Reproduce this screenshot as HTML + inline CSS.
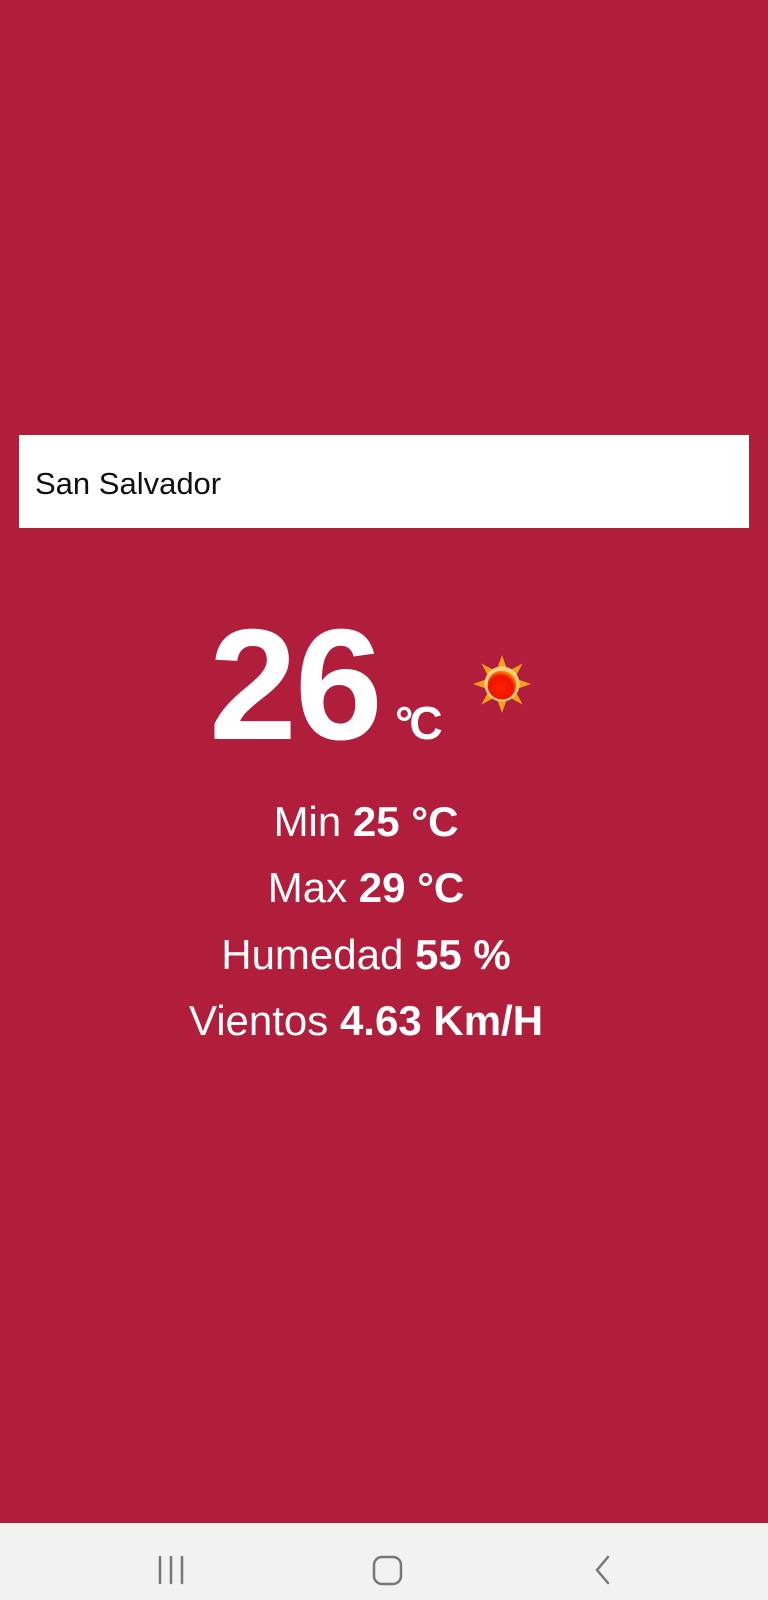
<!DOCTYPE html>
<html><head><meta charset="utf-8"><style>
html,body{margin:0;padding:0}
body{width:768px;height:1600px;background:#B01E3C;position:relative;overflow:hidden;font-family:"Liberation Sans",Arial,sans-serif;color:#fff}
.abs{position:absolute;line-height:1;white-space:nowrap}
.box{position:absolute;left:19px;top:435px;width:730px;height:93px;background:#fff}
.line{position:absolute;left:0;width:732px;text-align:center;font-size:42px;line-height:1}
b{font-weight:bold}
.nav{position:absolute;left:0;top:1523px;width:768px;height:77px;background:#f2f2f2}
</style></head><body>
<div class="box"></div>
<div class="abs" style="left:35px;top:468px;font-size:31px;color:#111">San Salvador</div>
<div class="abs" style="left:209px;top:606px;font-size:158px;font-weight:bold;letter-spacing:-2px">26</div>
<div class="abs" style="left:395px;top:700px;font-size:46px;font-weight:bold;letter-spacing:-4px">°C</div>
<svg style="position:absolute;left:471px;top:653px" width="62" height="62" viewBox="0 0 60 60">
<defs><radialGradient id="g" cx="0.45" cy="0.6" r="0.6"><stop offset="0" stop-color="#ff2200"/><stop offset="0.7" stop-color="#ee1100"/><stop offset="1" stop-color="#ff9900"/></radialGradient></defs>
<g fill="#f7a020">
<polygon points="30,2 35,16 25,16"/><polygon points="30,58 35,44 25,44"/><polygon points="2,30 16,35 16,25"/><polygon points="58,30 44,35 44,25"/>
<polygon points="10,10 23,17 17,23"/><polygon points="50,10 43,23 37,17"/><polygon points="10,50 17,37 23,43"/><polygon points="50,50 37,43 43,37"/>
</g>
<circle cx="30" cy="30" r="17" fill="#ffd080"/>
<circle cx="30" cy="31" r="14" fill="url(#g)"/>
</svg>
<div class="line" style="top:801px">Min <b>25 °C</b></div>
<div class="line" style="top:867px">Max <b>29 °C</b></div>
<div class="line" style="top:934px">Humedad <b>55 %</b></div>
<div class="line" style="top:1000px">Vientos <b>4.63 Km/H</b></div>
<div class="nav">
<svg width="768" height="77" style="position:absolute;left:0;top:0">
<g stroke="#777" stroke-width="2.5" fill="none" stroke-linecap="round">
<line x1="160" y1="34" x2="160" y2="60"/><line x1="171" y1="34" x2="171" y2="60"/><line x1="182" y1="34" x2="182" y2="60"/>
<rect x="374" y="34" width="27" height="27" rx="8"/>
<polyline points="608,34 597,47 608,60"/>
</g></svg>
</div>
</body></html>
